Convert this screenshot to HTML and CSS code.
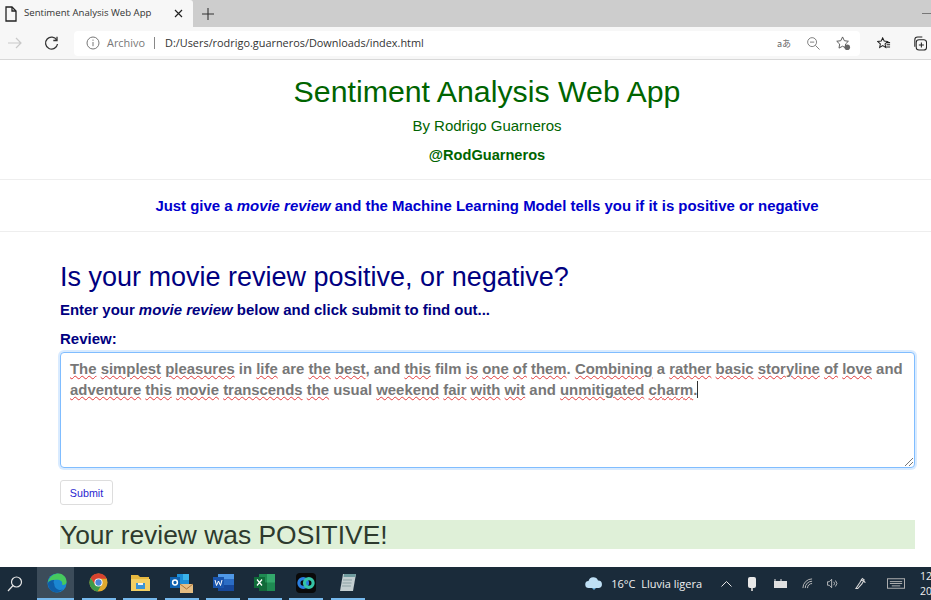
FILE: index.html
```html
<!DOCTYPE html>
<html lang="en">
<head>
  <meta charset="UTF-8" />
  <title>Sentiment Analysis Web App</title>
  <link rel="stylesheet" href="styles.css">
</head>
<body>
  <div class="tabbar">
    <div class="tab">
      <svg class="tab-icon" width="14" height="16" viewBox="0 0 14 16" fill="none" stroke="#222" stroke-width="1.3"><path d="M2 1h6l4 4v10H2z"/><path d="M8 1v4h4"/></svg>
      <span class="tab-title">Sentiment Analysis Web App</span>
      <svg class="tab-close" width="9" height="9" viewBox="0 0 9 9" stroke="#222" stroke-width="1.2"><path d="M1 1l7 7M8 1l-7 7"/></svg>
    </div>
    <svg class="tab-new" width="12" height="12" viewBox="0 0 12 12" stroke="#333" stroke-width="1.1"><path d="M6 0v12M0 6h12"/></svg>
    <div class="minimize"></div>
  </div>

  <div class="toolbar">
    <svg class="nav-forward" width="14" height="12" viewBox="0 0 14 12" fill="none" stroke="#c9c9c9" stroke-width="1.2"><path d="M0 6h13M8 1l5 5-5 5"/></svg>
    <svg class="nav-reload" width="15" height="15" viewBox="0 0 15 15" fill="none" stroke="#333" stroke-width="1.3"><path d="M12.800 4.200A6 6 0 1 0 13.500 8"/><path d="M13 .8v3.700H9.300"/></svg>
    <div class="address">
      <svg width="14" height="14" viewBox="0 0 14 14" fill="none" stroke="#777" stroke-width="1"><circle cx="7" cy="7" r="6"/><path d="M7 6v4.200M7 3.600v1.200"/></svg>
      <span class="archivo">Archivo</span>
      <span class="sep"></span>
      <span class="url">D:/Users/rodrigo.guarneros/Downloads/index.html</span>
      <span class="address-tools">
        <span class="translate">aあ</span>
        <svg width="13" height="13" viewBox="0 0 14 14" fill="none" stroke="#777" stroke-width="1"><circle cx="5.500" cy="5.500" r="4.800"/><path d="M9 9l4.500 4.500M3.200 5.500h4.600"/></svg>
        <svg width="15" height="15" viewBox="0 0 16 16" fill="none" stroke="#555" stroke-width="1"><path d="M7 1l1.900 4 4.300.6-3.100 3 .7 4.300L7 10.900 3.200 12.900l.7-4.300-3.100-3L5.100 5z"/><circle cx="12" cy="12" r="3" fill="#666" stroke="none"/></svg>
      </span>
    </div>
    <svg class="tool" width="14" height="13" viewBox="0 0 16 15" fill="none" stroke="#222" stroke-width="1.2"><path d="M6.500 1l1.700 3.700 4 .5-3 2.800.8 4-3.500-2-3.500 2 .8-4-3-2.800 4-.5z"/><path d="M11 6.500h4M11 9h4M10.500 11.500h4.500"/></svg>
    <svg class="tool tool-last" width="15" height="15" viewBox="0 0 16 16" fill="none" stroke="#222" stroke-width="1.1"><path d="M3 11.500V4a3 3 0 0 1 3-3h5"/><rect x="4.500" y="4" width="11" height="11" rx="3"/><path d="M10 6.800v5.400M7.300 9.500h5.400"/></svg>
  </div>

  <main class="page">
    <header class="masthead">
      <h1>Sentiment Analysis Web App</h1>
      <p class="byline">By Rodrigo Guarneros</p>
      <p class="handle">@RodGuarneros</p>
    </header>

    <p class="tagline">Just give a <em>movie review</em> and the Machine Learning Model tells you if it is positive or negative</p>

    <section class="content">
      <h2>Is your movie review positive, or negative?</h2>
      <h5>Enter your <em>movie review</em> below and click submit to find out...</h5>
      <label class="review-label">Review:</label>
      <div class="review-box">
        <span class="typo">The</span> <span class="typo">simplest</span> <span class="typo">pleasures</span> in <span class="typo">life</span> are <span class="typo">the</span> <span class="typo">best</span>, and <span class="typo">this</span> film <span class="typo">is</span> <span class="typo">one</span> <span class="typo">of</span> <span class="typo">them</span>. <span class="typo">Combining</span> a <span class="typo">rather</span> <span class="typo">basic</span> <span class="typo">storyline</span> <span class="typo">of</span> <span class="typo">love</span> and <span class="typo">adventure</span> <span class="typo">this</span> <span class="typo">movie</span> <span class="typo">transcends</span> <span class="typo">the</span> usual <span class="typo">weekend</span> <span class="typo">fair</span> <span class="typo">with</span> <span class="typo">wit</span> and <span class="typo">unmitigated</span> <span class="typo">charm</span>.<span class="caret"></span>
        <svg class="grip" width="8" height="8" viewBox="0 0 8 8" stroke="#777" stroke-width="1"><path d="M8 0L0 8M8 4L4 8"/></svg>
      </div>
      <button class="submit" type="button">Submit</button>
      <div class="result">Your review was POSITIVE!</div>
    </section>
  </main>

  <footer class="taskbar">
    <svg class="task-search" width="16" height="16" viewBox="0 0 16 16" fill="none" stroke="#e6e6e6" stroke-width="1.2"><circle cx="9.500" cy="6" r="5"/><path d="M6 9.500L1 15"/></svg>
    <div class="task-apps">
      <div class="task-app active">
        <svg width="20" height="20" viewBox="0 0 22 22"><circle cx="11" cy="11" r="10.500" fill="#1b87d2"/><path d="M1 11C2 3 9 .5 13 .6c5 .3 8.500 4.500 8.500 9 0 3-3 4-5 3.400 1-2 0-5-4.500-5.500C7 7 2.500 8 1 11z" fill="#46c95e"/><path d="M8 12c0 5 5 8 9.500 6-2 2.500-6 4-9.500 3C4 20 1 16 1 11c2-3 6-3.500 7-3-1 1-1 2.500 0 4z" fill="#0f5fa8"/></svg>
      </div>
      <div class="task-app">
        <svg width="19" height="19" viewBox="0 0 20 20"><circle cx="10" cy="10" r="9.500" fill="#e0a92e"/><path d="M10 .5a9.500 9.500 0 0 0-8.200 4.700L5.900 12 10 6h8.700A9.500 9.500 0 0 0 10 .5z" fill="#d8432f"/><path d="M1.800 5.200A9.500 9.500 0 0 0 9 19.400L13 12.500H6.500z" fill="#3d9a4b"/><circle cx="10" cy="10" r="4.300" fill="#fff"/><circle cx="10" cy="10" r="3.300" fill="#4a86d8"/></svg>
      </div>
      <div class="task-app">
        <svg width="19" height="17" viewBox="0 0 19 17"><path d="M0 1h7l2 2h9v3H0z" fill="#e8b93f"/><path d="M0 5h19v12H0z" fill="#f3cf63"/><path d="M5 9h9v6H5z" fill="#3a94d6"/><path d="M7 9h5v2H7z" fill="#f3f3f3"/></svg>
      </div>
      <div class="task-app">
        <svg width="23" height="20" viewBox="0 0 23 20"><path d="M7 1h12v12H7z" fill="#1d8fd8"/><path d="M13 1h6v6h-6z" fill="#3bb3ea"/><path d="M0 4h10v11H0z" fill="#0f62b0"/><circle cx="5" cy="9.500" r="2.400" fill="none" stroke="#fff" stroke-width="1.500"/><path d="M10 11h13v9H10z" fill="#e5bd82"/><path d="M10 11l6.500 5 6.500-5" fill="none" stroke="#a9743c"/></svg>
      </div>
      <div class="task-app">
        <svg width="21" height="17" viewBox="0 0 21 17"><path d="M5 0h16v17H5z" fill="#2b6cc4"/><path d="M5 0h16v5H5z" fill="#4f98e6"/><path d="M5 11h16v6H5z" fill="#17489a"/><path d="M0 3h11v11H0z" fill="#1a55ad"/><path d="M2 6l1.500 5.500L5.500 7l2 4.500L9 6" fill="none" stroke="#fff" stroke-width="1"/></svg>
      </div>
      <div class="task-app">
        <svg width="21" height="17" viewBox="0 0 21 17"><path d="M5 0h16v17H5z" fill="#1f8a52"/><path d="M13 0h8v8.500h-8z" fill="#33a86b"/><path d="M5 8.500h8V17H5z" fill="#14683a"/><path d="M0 3h11v11H0z" fill="#0f6b39"/><path d="M3 5.500l5 6M8 5.500l-5 6" stroke="#fff" stroke-width="1.200"/></svg>
      </div>
      <div class="task-app">
        <svg width="20" height="20" viewBox="0 0 20 20"><rect width="20" height="20" rx="4" fill="#0a0a0a"/><circle cx="7.200" cy="10" r="4.300" fill="none" stroke="#2a7fe0" stroke-width="3.200"/><circle cx="12.800" cy="10" r="4.300" fill="none" stroke="#35c4a6" stroke-width="3.200"/></svg>
      </div>
      <div class="task-app">
        <svg width="18" height="19" viewBox="0 0 18 19"><path d="M4 1h13l-3 17H1z" fill="#c3ced0"/><path d="M5 1h12l-1 3H4.500z" fill="#6f9b9e"/><path d="M4 7h9M3.500 10h9M3 13h9" stroke="#8da2a5"/></svg>
      </div>
    </div>
    <div class="tray">
      <svg width="18" height="13" viewBox="0 0 18 13"><path d="M4 11a3.500 3.500 0 0 1-.5-7A5 5 0 0 1 13 3.500 3.800 3.800 0 0 1 14 11z" fill="#bfe0f5"/><path d="M7 11h4l-2 2z" fill="#6fb3e0"/></svg>
      <span class="weather">16°C&nbsp; Lluvia ligera</span>
      <svg class="tray-up" width="11" height="6" viewBox="0 0 11 6" fill="none" stroke="#e6e6e6"><path d="M.5 5.500l5-5 5 5"/></svg>
      <svg class="tray-mic" width="8" height="14" viewBox="0 0 8 14"><rect width="8" height="11" rx="2" fill="#e8e8e8"/><path d="M3 11h2v3H3z" fill="#bbb"/></svg>
      <svg class="tray-batt" width="15" height="9" viewBox="0 0 15 9"><path d="M2 2h13v7H2z" fill="#e0e0e0"/><path d="M3 0v2M9 0v2" stroke="#e0e0e0"/></svg>
      <svg class="tray-wifi" width="11" height="11" viewBox="0 0 12 12" fill="none" stroke="#c4c4c4"><path d="M1 11a10 10 0 0 1 10-10M3.500 11A7.500 7.500 0 0 1 11 3.500M6 11a5 5 0 0 1 5-5"/></svg>
      <svg class="tray-sound" width="11" height="11" viewBox="0 0 13 11" fill="none" stroke="#d0d0d0"><path d="M.5 3.500h2l3-3v10l-3-3h-2zM8 3.500a3 3 0 0 1 0 4M10 2a5 5 0 0 1 0 7"/></svg>
      <svg class="tray-pen" width="11" height="13" viewBox="0 0 12 13" fill="none" stroke="#d8d8d8" stroke-width="1.200"><path d="M1 12l4-6 3-5 2 1.500L7.500 7 3 12zM6 3c2 0 5 1 5 3"/></svg>
      <svg class="tray-keys" width="18" height="11" viewBox="0 0 19 11" fill="none" stroke="#b5b5b5"><rect x=".5" y=".5" width="18" height="10"/><path d="M3 3.500h13M3 5.500h13M5 8h9"/></svg>
      <div class="clock">12<br>20/</div>
    </div>
  </footer>
</body>
</html>
```

FILE: styles.css
```css
html, body {
  margin: 0;
  padding: 0;
}

body {
  width: 931px;
  height: 600px;
  overflow: hidden;
  display: flex;
  flex-direction: column;
  background-color: white;
  font-family: "Liberation Sans", Arial, sans-serif;
}

svg {
  display: block;
  flex: none;
}

/* browser chrome */
.tabbar {
  height: 27px;
  flex: none;
  display: flex;
  align-items: center;
  background-color: #cdcdcd;
}

.tab {
  width: 193px;
  height: 27px;
  display: flex;
  align-items: center;
  background-color: #f7f7f7;
  border-top-right-radius: 3px;
  font-family: "Open Sans", sans-serif;
  font-size: 9.6px;
  color: #333;
}

.tab-icon {
  margin-left: 4px;
}

.tab-title {
  margin-left: 6px;
  margin-bottom: 2px;
  flex: 1;
  white-space: nowrap;
}

.tab-close {
  margin-right: 10px;
}

.tab-new {
  margin-left: 9px;
}

.minimize {
  margin-left: auto;
  width: 9px;
  height: 1px;
  background-color: #777;
}

.toolbar {
  height: 32px;
  flex: none;
  display: flex;
  align-items: center;
  background-color: #f7f7f7;
  border-bottom: 1px solid #d8d8d8;
}

.nav-forward {
  margin-left: 8px;
}

.nav-reload {
  margin-left: 22px;
}

.address {
  width: 786px;
  margin-left: 15px;
  height: 25px;
  flex: none;
  display: flex;
  align-items: center;
  background-color: white;
  border-radius: 4px;
  font-family: "Open Sans", sans-serif;
  font-size: 10.9px;
  padding-left: 12px;
  box-sizing: border-box;
}

.archivo {
  margin-left: 7px;
  margin-bottom: 2px;
  color: #777;
}

.sep {
  width: 1px;
  height: 12px;
  background-color: #888;
  margin: 0 10px 0 9px;
}

.url {
  margin-bottom: 2px;
  color: #333;
  white-space: nowrap;
}

.address-tools {
  margin-left: auto;
  margin-right: 9px;
  display: flex;
  align-items: center;
  gap: 16px;
}

.translate {
  font-family: "Noto Sans CJK JP", sans-serif;
  font-size: 9px;
  color: #666;
}

.tool {
  margin-left: 17px;
}

.tool-last {
  margin-left: 21px;
}

/* page */
.page {
  flex: 1;
  min-height: 0;
  overflow: hidden;
}

.masthead {
  text-align: center;
  color: #006400;
  height: 120px;
  box-sizing: border-box;
  padding: 13px 0 0 43px;
  border-bottom: 1px solid #eeeeee;
}

h1 {
  margin: 0;
  font-size: 30.3px;
  font-weight: normal;
  line-height: 37px;
}

.byline {
  margin: 6px 0 0;
  font-size: 15px;
  line-height: 20px;
}

.handle {
  margin: 9px 0 0;
  font-size: 14.6px;
  font-weight: bold;
  line-height: 20px;
}

.tagline {
  margin: 0;
  height: 52px;
  line-height: 52px;
  box-sizing: border-box;
  padding-left: 43px;
  text-align: center;
  font-size: 14.95px;
  font-weight: bold;
  color: #0000cd;
  border-bottom: 1px solid #eeeeee;
}

.content {
  padding: 28px 16px 0 60px;
  color: #000080;
}

h2 {
  margin: 0;
  font-size: 27px;
  font-weight: normal;
  line-height: 35px;
}

h5 {
  margin: 5px 0 0;
  font-size: 14.95px;
  font-weight: bold;
  line-height: 20px;
}

.review-label {
  display: block;
  margin-top: 9px;
  font-size: 15px;
  font-weight: bold;
  line-height: 20px;
}

.review-box {
  position: relative;
  height: 116px;
  margin-top: 3px;
  box-sizing: border-box;
  padding: 6px 4px 5px 9px;
  background-color: white;
  border: 1px solid #80bdff;
  border-radius: 4px;
  box-shadow: 0 0 0 2px rgba(0, 123, 255, 0.15);
  font-size: 14.9px;
  font-weight: bold;
  line-height: 21px;
  color: #777777;
}

.typo {
  text-decoration: underline wavy #e03a3a 1px;
  text-underline-offset: 1px;
}

.caret {
  display: inline-block;
  width: 1px;
  height: 17px;
  vertical-align: text-bottom;
  background-color: #333;
}

.grip {
  position: absolute;
  right: 1px;
  bottom: 1px;
}

.submit {
  display: block;
  margin-top: 12px;
  width: 53px;
  height: 25px;
  padding: 0;
  background-color: white;
  border: 1px solid #dddddd;
  border-radius: 3px;
  font-family: inherit;
  font-size: 10.7px;
  color: #2a1fd0;
}

.result {
  margin-top: 15px;
  height: 29px;
  background-color: #dff0d8;
  font-size: 26.4px;
  line-height: 30px;
  color: #2d3a2d;
}

/* windows taskbar */
.taskbar {
  height: 33px;
  flex: none;
  display: flex;
  align-items: center;
  background-color: #1a2b3a;
  color: #f0f0f0;
  font-family: "Open Sans", sans-serif;
  font-size: 11px;
}

.task-search {
  margin-left: 7px;
}

.task-apps {
  display: flex;
  align-self: stretch;
  margin-left: 14px;
  gap: 7.5px;
}

.task-app {
  width: 34px;
  display: flex;
  align-items: center;
  justify-content: center;
  border-bottom: 2px solid #76b9ed;
  box-sizing: border-box;
}

.task-app.active {
  width: 37px;
  padding-left: 3px;
  background-color: #3c4c5a;
}

.tray {
  margin-left: auto;
  display: flex;
  align-items: center;
}

.weather {
  margin-left: 8px;
  white-space: nowrap;
}

.tray-up {
  margin-left: 19px;
}

.tray-mic {
  margin-left: 16px;
}

.tray-batt {
  margin-left: 16px;
}

.tray-wifi {
  margin-left: 15px;
}

.tray-sound {
  margin-left: 14px;
}

.tray-pen {
  margin-left: 17px;
}

.tray-keys {
  margin-left: 21px;
}

.clock {
  width: 11px;
  margin-left: 15px;
  overflow: hidden;
  white-space: nowrap;
  font-size: 10.5px;
  line-height: 15px;
}
```
